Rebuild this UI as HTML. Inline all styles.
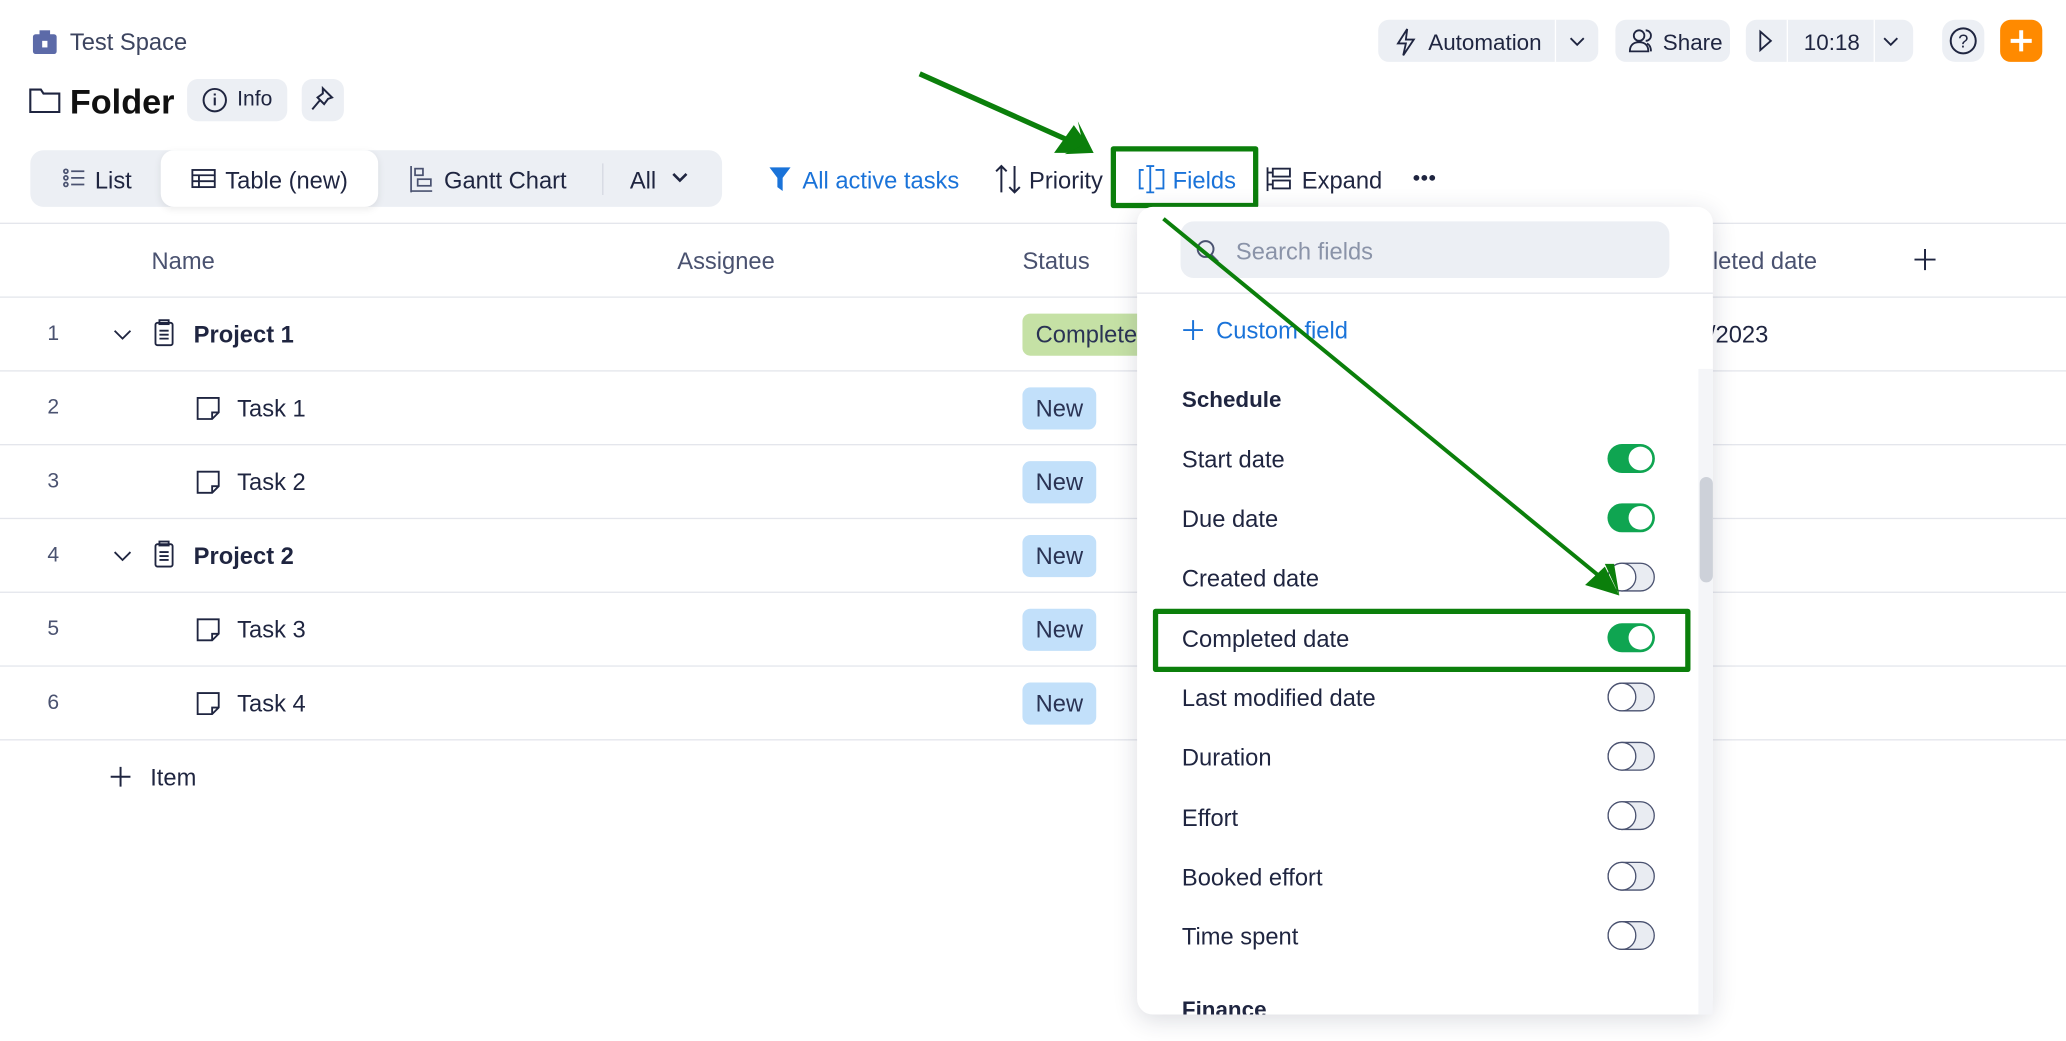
<!DOCTYPE html>
<html><head><meta charset="utf-8"><style>
*{box-sizing:border-box;margin:0;padding:0}
html,body{width:2066px;height:1041px;overflow:hidden;background:#fff}
#w{position:absolute;left:0;top:0;width:1568px;height:790px;transform:scale(1.31760);transform-origin:0 0;font-family:"Liberation Sans",sans-serif;color:#1f2540;font-size:18px}
.a{position:absolute;white-space:nowrap}
.btn{position:absolute;background:#eceff4;border-radius:8px}
.t{line-height:1}
.row{position:absolute;left:0;width:1568px;height:56px;border-top:1px solid #e4e6ec}
.num{position:absolute;left:36px;top:19px;font-size:16px;color:#4a5270}
.pill{position:absolute;left:776px;top:12px;height:32px;border-radius:6px;background:#c2e0fa;padding:6px 10px;font-size:18px;color:#2a3354}
.tog{position:absolute;left:1220px;width:36px;height:22px;border-radius:11px}
.on{background:#0fa551}
.on::after{content:"";position:absolute;right:2px;top:2px;width:18px;height:18px;border-radius:50%;background:#fff}
.off{background:#e9ecf2;border:1px solid #4a5270}
.off::after{content:"";position:absolute;left:-1px;top:-1px;width:22px;height:22px;border-radius:50%;background:#fff;border:1px solid #4a5270;box-sizing:border-box}
.fi{position:absolute;left:897px;font-size:18px;color:#1f2540}
svg{position:absolute;overflow:visible}
</style></head><body><div id="w">

<!-- header -->
<svg style="left:25px;top:23px" width="18" height="18" viewBox="0 0 18 18"><rect x="5" y="0" width="8" height="4" fill="#5c6aa8"/><rect x="0" y="3" width="18" height="15" rx="2" fill="#5c6aa8"/><rect x="7" y="8" width="4" height="5" fill="#fff"/></svg>
<div class="a t" style="left:53px;top:23px;font-size:18px;color:#3d4560">Test Space</div>
<svg style="left:22px;top:66px" width="24" height="20" viewBox="0 0 24 20"><path d="M1 2h8l2 3h12v14H1z" fill="none" stroke="#1f2540" stroke-width="1.6"/></svg>
<div class="a t" style="left:53px;top:64px;font-size:26px;font-weight:bold;color:#111">Folder</div>
<div class="btn" style="left:142px;top:60px;width:76px;height:32px"></div>
<svg style="left:153px;top:66px" width="20" height="20"><circle cx="10" cy="10" r="8.5" fill="none" stroke="#1f2540" stroke-width="1.5"/><path d="M10 8v6M10 5v1.5" stroke="#1f2540" stroke-width="1.6"/></svg>
<div class="a t" style="left:180px;top:68px;font-size:16px">Info</div>
<div class="btn" style="left:229px;top:60px;width:32px;height:32px"></div>
<svg style="left:236px;top:66px" width="18" height="20" viewBox="0 0 18 20"><path d="M9 1l7 7-3 1-3 4-5-5 4-3zM6.5 10.5L1 17" fill="none" stroke="#1f2540" stroke-width="1.5"/></svg>

<!-- top right -->
<div class="btn" style="left:1046px;top:15px;width:167px;height:32px"></div>
<div class="a" style="left:1180px;top:15px;width:1px;height:32px;background:#fff"></div>
<svg style="left:1059px;top:21px" width="16" height="22" viewBox="0 0 16 22"><path d="M9 1L2 12h6l-2 9 8-12H8z" fill="none" stroke="#1f2540" stroke-width="1.4"/></svg>
<div class="a t" style="left:1084px;top:24px;font-size:17px">Automation</div>
<svg style="left:1190px;top:27px" width="14" height="10"><path d="M2 2l5 5 5-5" fill="none" stroke="#1f2540" stroke-width="1.4"/></svg>
<div class="btn" style="left:1226px;top:15px;width:87px;height:32px"></div>
<svg style="left:1236px;top:21px" width="22" height="20" viewBox="0 0 22 20"><circle cx="8" cy="6" r="4" fill="none" stroke="#1f2540" stroke-width="1.4"/><path d="M1 18c0-5 3-7 7-7s7 2 7 7z" fill="none" stroke="#1f2540" stroke-width="1.4"/><path d="M13 2a4 4 0 010 8M17 18c0-3-1-5-3-6" fill="none" stroke="#1f2540" stroke-width="1.4"/></svg>
<div class="a t" style="left:1262px;top:24px;font-size:17px">Share</div>
<div class="btn" style="left:1325px;top:15px;width:127px;height:32px"></div>
<div class="a" style="left:1356px;top:15px;width:1px;height:32px;background:#fff"></div>
<div class="a" style="left:1422px;top:15px;width:1px;height:32px;background:#fff"></div>
<svg style="left:1334px;top:23px" width="12" height="16"><path d="M2 1l8 7-8 7z" fill="none" stroke="#1f2540" stroke-width="1.4"/></svg>
<div class="a t" style="left:1369px;top:24px;font-size:17px">10:18</div>
<svg style="left:1428px;top:27px" width="14" height="10"><path d="M2 2l5 5 5-5" fill="none" stroke="#1f2540" stroke-width="1.4"/></svg>
<div class="btn" style="left:1474px;top:15px;width:32px;height:32px;border-radius:10px"></div>
<svg style="left:1479px;top:20px" width="22" height="22"><circle cx="11" cy="11" r="9.5" fill="none" stroke="#1f2540" stroke-width="1.5"/><text x="11" y="16" text-anchor="middle" font-size="14" font-family="Liberation Sans" fill="#1f2540">?</text></svg>
<div class="a" style="left:1518px;top:15px;width:32px;height:32px;border-radius:8px;background:#ff8a00"></div>
<svg style="left:1524px;top:21px" width="20" height="20"><path d="M10 2v16M2 10h16" stroke="#fff" stroke-width="3"/></svg>

<!-- view tabs -->
<div class="btn" style="left:23px;top:114px;width:525px;height:43px;border-radius:10px"></div>
<svg style="left:47px;top:127px" width="18" height="16"><g fill="none" stroke="#4a5270" stroke-width="1.3"><circle cx="3" cy="3" r="1.5"/><circle cx="3" cy="8" r="1.5"/><circle cx="3" cy="13" r="1.5"/><path d="M7 3h10M7 8h10M7 13h10"/></g></svg>
<div class="a t" style="left:72px;top:128px">List</div>
<div class="a" style="left:122px;top:114px;width:165px;height:43px;background:#fff;border-radius:10px;box-shadow:0 2px 6px rgba(0,0,0,.08)"></div>
<svg style="left:145px;top:128px" width="19" height="15"><g fill="none" stroke="#1f2540" stroke-width="1.4"><rect x="1" y="1" width="17" height="13"/><path d="M1 5h17M1 9.5h17M6 5v9"/></g></svg>
<div class="a t" style="left:171px;top:128px">Table (new)</div>
<svg style="left:311px;top:126px" width="18" height="20"><g fill="none" stroke="#4a5270" stroke-width="1.3"><path d="M1 0v20"/><rect x="4" y="2" width="6" height="5"/><rect x="6" y="10" width="10" height="5"/><path d="M1 19h16"/></g></svg>
<div class="a t" style="left:337px;top:128px">Gantt Chart</div>
<div class="a" style="left:457px;top:124px;width:1px;height:24px;background:#d5d9e2"></div>
<div class="a t" style="left:478px;top:128px">All</div>
<svg style="left:509px;top:130px" width="14" height="10"><path d="M2 2l5 5 5-5" fill="none" stroke="#1f2540" stroke-width="2"/></svg>

<!-- toolbar -->
<svg style="left:584px;top:127px" width="16" height="18"><path d="M0 0h16l-6 8v10l-4-3V8z" fill="#1a73d9"/></svg>
<div class="a t" style="left:609px;top:128px;color:#1a73d9">All active tasks</div>
<svg style="left:755px;top:125px" width="20" height="22"><g fill="none" stroke="#1f2540" stroke-width="1.5"><path d="M5 21V1M1 5l4-4 4 4M15 1v20M11 17l4 4 4-4"/></g></svg>
<div class="a t" style="left:781px;top:128px">Priority</div>
<svg style="left:864px;top:125px" width="20" height="22"><g fill="none" stroke="#1a73d9" stroke-width="1.4"><path d="M4 4H1v14h3M13 4h6v14h-6M6 1h6M6 21h6M9 1v20"/></g></svg>
<div class="a t" style="left:890px;top:128px;color:#1a73d9">Fields</div>
<div class="a" style="left:843px;top:111px;width:112px;height:47px;border:4px solid #0b7f0b;border-radius:2px"></div>
<svg style="left:961px;top:126px" width="20" height="20"><g fill="none" stroke="#1f2540" stroke-width="1.4"><path d="M1 1v18"/><rect x="5" y="2" width="13" height="6"/><rect x="5" y="11" width="13" height="6"/><path d="M1 5h4M1 14h4"/></g></svg>
<div class="a t" style="left:988px;top:128px">Expand</div>
<svg style="left:1072px;top:132px" width="20" height="6"><circle cx="3" cy="3" r="2.2" fill="#1f2540"/><circle cx="9" cy="3" r="2.2" fill="#1f2540"/><circle cx="15" cy="3" r="2.2" fill="#1f2540"/></svg>

<!-- table -->
<div class="row" style="top:169px;height:56px"></div>
<div class="a t" style="left:115px;top:189px;color:#4a5270">Name</div>
<div class="a t" style="left:514px;top:189px;color:#4a5270">Assignee</div>
<div class="a t" style="left:776px;top:189px;color:#4a5270">Status</div>
<div class="a t" style="left:1290px;top:189px;color:#4a5270">pleted date</div>
<svg style="left:1452px;top:188px" width="18" height="18"><path d="M9 1v16M1 9h16" stroke="#1f2540" stroke-width="1.5"/></svg>

<div class="row" style="top:225px"><div class="num">1</div>
<svg style="left:86px;top:24px" width="14" height="9"><path d="M1 1l6 6 6-6" fill="none" stroke="#1f2540" stroke-width="1.4"/></svg>
<svg style="left:117px;top:16px" width="15" height="21"><g fill="none" stroke="#1f2540" stroke-width="1.4"><rect x="1" y="3" width="13" height="17" rx="1.5"/><rect x="4" y="1" width="7" height="3"/><path d="M4 9h7M4 12h7M4 15h7"/></g></svg>
<div class="a t" style="left:147px;top:19px;font-weight:bold">Project 1</div>
<div class="pill" style="background:#c5e1a5;width:100px">Complete</div>
<div class="a t" style="left:1297px;top:19px">/2023</div></div>
<div class="row" style="top:281px"><div class="num">2</div>
<svg style="left:149px;top:19px" width="18" height="18"><path d="M1 1h16v11l-5 5H1zM17 12h-5v5" fill="none" stroke="#1f2540" stroke-width="1.4"/></svg>
<div class="a t" style="left:180px;top:19px">Task 1</div><div class="pill">New</div></div>
<div class="row" style="top:337px"><div class="num">3</div>
<svg style="left:149px;top:19px" width="18" height="18"><path d="M1 1h16v11l-5 5H1zM17 12h-5v5" fill="none" stroke="#1f2540" stroke-width="1.4"/></svg>
<div class="a t" style="left:180px;top:19px">Task 2</div><div class="pill">New</div></div>
<div class="row" style="top:393px"><div class="num">4</div>
<svg style="left:86px;top:24px" width="14" height="9"><path d="M1 1l6 6 6-6" fill="none" stroke="#1f2540" stroke-width="1.4"/></svg>
<svg style="left:117px;top:16px" width="15" height="21"><g fill="none" stroke="#1f2540" stroke-width="1.4"><rect x="1" y="3" width="13" height="17" rx="1.5"/><rect x="4" y="1" width="7" height="3"/><path d="M4 9h7M4 12h7M4 15h7"/></g></svg>
<div class="a t" style="left:147px;top:19px;font-weight:bold">Project 2</div><div class="pill">New</div></div>
<div class="row" style="top:449px"><div class="num">5</div>
<svg style="left:149px;top:19px" width="18" height="18"><path d="M1 1h16v11l-5 5H1zM17 12h-5v5" fill="none" stroke="#1f2540" stroke-width="1.4"/></svg>
<div class="a t" style="left:180px;top:19px">Task 3</div><div class="pill">New</div></div>
<div class="row" style="top:505px"><div class="num">6</div>
<svg style="left:149px;top:19px" width="18" height="18"><path d="M1 1h16v11l-5 5H1zM17 12h-5v5" fill="none" stroke="#1f2540" stroke-width="1.4"/></svg>
<div class="a t" style="left:180px;top:19px">Task 4</div><div class="pill">New</div></div>
<div class="row" style="top:561px;border-top:1px solid #e4e6ec;height:1px"></div>
<svg style="left:83px;top:581px" width="17" height="17"><path d="M8.5 1v15M1 8.5h15" stroke="#1f2540" stroke-width="1.5"/></svg>
<div class="a t" style="left:114px;top:581px">Item</div>

<!-- dropdown -->
<div class="a" style="left:863px;top:157px;width:437px;height:613px;background:#fff;border-radius:12px;box-shadow:0 4px 18px rgba(30,40,70,.16)"></div>
<div class="a" style="left:896px;top:168px;width:371px;height:43px;background:#eceff4;border-radius:10px"></div>
<svg style="left:907px;top:181px" width="20" height="20"><circle cx="8" cy="8" r="6" fill="none" stroke="#4a5270" stroke-width="1.5"/><path d="M12.5 12.5l5 5" stroke="#4a5270" stroke-width="1.5"/></svg>
<div class="a t" style="left:938px;top:182px;color:#8a93a8">Search fields</div>
<div class="a" style="left:863px;top:222px;width:437px;height:1px;background:#e4e6ec"></div>
<svg style="left:897px;top:242px" width="17" height="17"><path d="M8.5 1v15M1 8.5h15" stroke="#1a73d9" stroke-width="1.5"/></svg>
<div class="a t" style="left:923px;top:242px;color:#1a73d9">Custom field</div>
<div class="fi t" style="top:295px;font-weight:bold;font-size:17px">Schedule</div>
<div class="fi t" style="top:340px">Start date</div><div class="tog on" style="top:337px"></div>
<div class="fi t" style="top:385px">Due date</div><div class="tog on" style="top:382px"></div>
<div class="fi t" style="top:430px">Created date</div><div class="tog off" style="top:427px"></div>
<div class="fi t" style="top:476px">Completed date</div><div class="tog on" style="top:473px"></div>
<div class="fi t" style="top:521px">Last modified date</div><div class="tog off" style="top:518px"></div>
<div class="fi t" style="top:566px">Duration</div><div class="tog off" style="top:563px"></div>
<div class="fi t" style="top:612px">Effort</div><div class="tog off" style="top:608px"></div>
<div class="fi t" style="top:657px">Booked effort</div><div class="tog off" style="top:654px"></div>
<div class="fi t" style="top:702px">Time spent</div><div class="tog off" style="top:699px"></div>
<div class="a" style="left:880px;top:752px;width:400px;height:18px;overflow:hidden"><div class="t" style="position:absolute;left:17px;top:6px;font-weight:bold;font-size:17px">Finance</div></div>
<div class="a" style="left:1289px;top:280px;width:11px;height:490px;background:#f4f5f8"></div>
<div class="a" style="left:1290px;top:362px;width:10px;height:80px;background:#cdd1d9;border-radius:5px"></div>
<div class="a" style="left:875px;top:462px;width:408px;height:48px;border:4px solid #0b7f0b;border-radius:2px"></div>

<!-- arrows -->
<svg style="left:0;top:0" width="1568" height="790">
<line x1="698" y1="56" x2="812" y2="107" stroke="#0b7f0b" stroke-width="4"/>
<polygon points="830,116 800,116 815,95" fill="#0b7f0b"/>
<polygon points="808,117 830,116 818,92 822,110" fill="#0b7f0b"/>
<line x1="883" y1="166" x2="1222" y2="444" stroke="#0b7f0b" stroke-width="3"/>
<polygon points="1229,452 1203,444 1218,430" fill="#0b7f0b"/>
<polygon points="1229,452 1218,428 1225,428" fill="#0b7f0b"/>
</svg>
</div></body></html>
